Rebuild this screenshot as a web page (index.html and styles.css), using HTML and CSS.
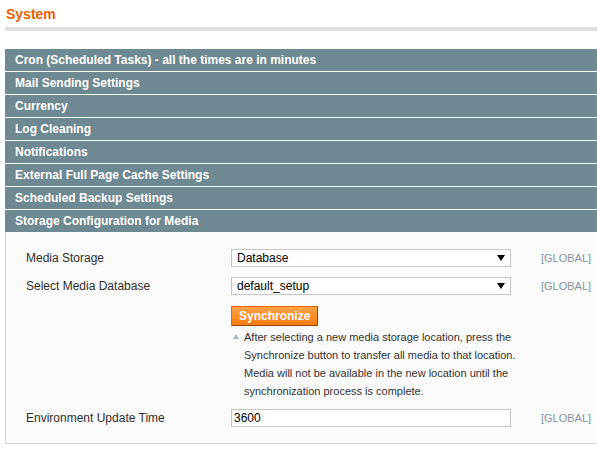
FILE: index.html
```html
<!DOCTYPE html>
<html>
<head>
<meta charset="utf-8">
<link rel="stylesheet" href="styles.css">
</head>
<body>
<div class="page">
  <div class="content-header">
    <h3 class="title">System</h3>
  </div>
  <div class="sections">
    <div class="section"><div class="section-head">Cron (Scheduled Tasks) - all the times are in minutes</div></div>
    <div class="section"><div class="section-head">Mail Sending Settings</div></div>
    <div class="section"><div class="section-head">Currency</div></div>
    <div class="section"><div class="section-head">Log Cleaning</div></div>
    <div class="section"><div class="section-head">Notifications</div></div>
    <div class="section"><div class="section-head">External Full Page Cache Settings</div></div>
    <div class="section"><div class="section-head">Scheduled Backup Settings</div></div>
    <div class="section">
      <div class="section-head">Storage Configuration for Media</div>
      <div class="fieldset">
        <div class="row">
          <div class="label">Media Storage</div>
          <div class="value">
            <div class="select"><span>Database</span><span class="arrow"></span></div>
          </div>
          <div class="scope">[GLOBAL]</div>
        </div>
        <div class="row row-gap">
          <div class="label">Select Media Database</div>
          <div class="value">
            <div class="select"><span>default_setup</span><span class="arrow"></span></div>
            <button class="btn">Synchronize</button>
            <div class="note">
              <span class="note-icon"></span>
              <p class="note-text">After selecting a new media storage location, press the<br>Synchronize button to transfer all media to that location.<br>Media will not be available in the new location until the<br>synchronization process is complete.</p>
            </div>
          </div>
          <div class="scope">[GLOBAL]</div>
        </div>
        <div class="row row-gap2">
          <div class="label">Environment Update Time</div>
          <div class="value">
            <div class="input">3600</div>
          </div>
          <div class="scope">[GLOBAL]</div>
        </div>
      </div>
    </div>
  </div>
</div>
</body>
</html>
```
FILE: styles.css
```css
html, body {
  margin: 0;
  padding: 0;
  background: #ffffff;
  overflow: hidden;
}
body {
  font-family: "Liberation Sans", Arial, sans-serif;
  font-size: 12px;
  color: #2f2f2f;
}
.page {
  padding-left: 5px;
  width: 600px;
}
.content-header {
  padding: 5px 0 4px 1px;
  border-bottom: 4px solid #dfdfdf;
}
.title {
  margin: 0;
  font-size: 14px;
  line-height: 18px;
  font-weight: bold;
  color: #eb5e00;
}
.sections {
  margin-top: 18px;
}
.section + .section {
  margin-top: 1px;
}
.section-head {
  height: 22px;
  line-height: 22px;
  padding: 0 10px;
  background: #6f8992;
  color: #ffffff;
  font-weight: bold;
  font-size: 12px;
}
.fieldset {
  background: #fafafa;
  border: 1px solid #d6d6d6;
  border-top: 0;
  padding: 17px 0 16px 20px;
}
.row {
  display: grid;
  grid-template-columns: 205px 280px auto;
  align-items: start;
}
.row-gap {
  margin-top: 10px;
}
.row-gap2 {
  margin-top: 9px;
}
.label {
  line-height: 18px;
  color: #2f2f2f;
}
.scope {
  line-height: 18px;
  padding-left: 30px;
  font-size: 11px;
  color: #8294a2;
}
.select {
  box-sizing: border-box;
  height: 18px;
  border: 1px solid #c6c6c6;
  background: #ffffff;
  display: flex;
  align-items: center;
  justify-content: space-between;
  padding: 0 5px 0 5px;
  color: #000000;
  line-height: 16px;
}
.arrow {
  width: 0;
  height: 0;
  border-left: 4px solid transparent;
  border-right: 4px solid transparent;
  border-top: 6px solid #000000;
}
.btn {
  display: block;
  margin: 11px 0 0 0;
  box-sizing: border-box;
  height: 20px;
  padding: 0 7px;
  border: 1px solid;
  border-color: #ed6502 #a04300 #a04300 #ed6502;
  background: linear-gradient(#ffa346, #f77a10);
  color: #ffffff;
  font-family: "Liberation Sans", Arial, sans-serif;
  font-weight: bold;
  font-size: 12px;
  line-height: 18px;
}
.note {
  margin-top: 2px;
  margin-right: -30px;
  display: flex;
  align-items: flex-start;
}
.note-icon {
  flex: none;
  width: 0;
  height: 0;
  margin: 6px 5px 0 2px;
  border-left: 3px solid transparent;
  border-right: 3px solid transparent;
  border-bottom: 5px solid #a9b6bf;
}
.note-text {
  margin: 0;
  font-size: 11px;
  line-height: 18px;
  color: #333333;
  white-space: nowrap;
}
.input {
  box-sizing: border-box;
  height: 18px;
  border: 1px solid #c6c6c6;
  background: #ffffff;
  padding: 0 2px;
  line-height: 16px;
  color: #000000;
}
```
